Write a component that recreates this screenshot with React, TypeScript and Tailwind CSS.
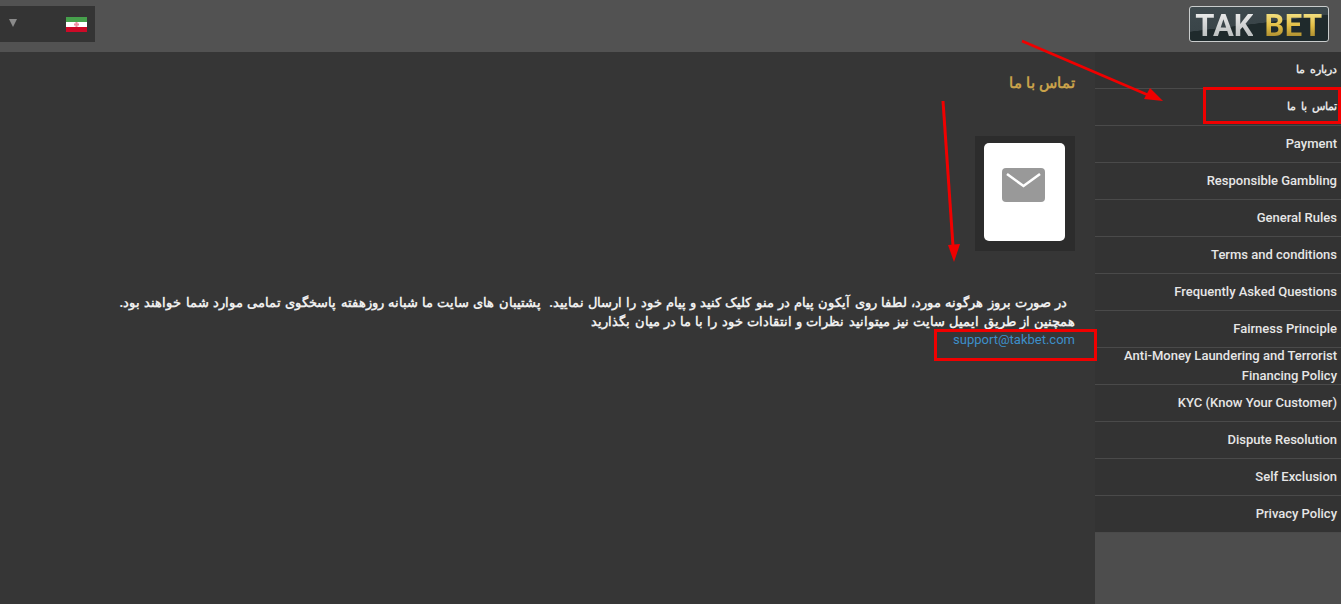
const menu = [
  { label: "درباره ما", fa: true },
  { label: "تماس با ما", fa: true },
  { label: "Payment" },
  { label: "Responsible Gambling" },
  { label: "General Rules" },
  { label: "Terms and conditions" },
  { label: "Frequently Asked Questions" },
  { label: "Fairness Principle" },
  { label: "Anti-Money Laundering and Terrorist Financing Policy" },
  { label: "KYC (Know Your Customer)" },
  { label: "Dispute Resolution" },
  { label: "Self Exclusion" },
  { label: "Privacy Policy" },
];

function Logo() {
  return (
    <div className="w-[140px] h-[36px] rounded-[3px] border border-[#c9cccc] bg-[linear-gradient(173deg,#3f4a4e_0%,#3a4549_48%,#1f2a2c_49%)] pt-[2px] flex items-center justify-center font-['Roboto',sans-serif] font-bold text-[31px] leading-none">
      <span className="bg-gradient-to-b from-[#f0f0f0] to-[#b4b8b8] bg-clip-text text-transparent">TAK</span>
      <span className="ml-[11px] tracking-[0.5px] bg-gradient-to-b from-[#f6e98f] via-[#e3bf45] to-[#9a7d28] bg-clip-text text-transparent">BET</span>
    </div>
  );
}

function Flag() {
  return (
    <svg className="mt-[1px]" width="21" height="15" viewBox="0 0 21 15">
      <rect width="21" height="5" fill="#46a04c" />
      <rect y="5" width="21" height="5" fill="#ffffff" />
      <rect y="10" width="21" height="5" fill="#cc0a27" />
      <path d="M10.5 5v5M8 7.5h5" stroke="#ee8fa0" strokeWidth="2" />
    </svg>
  );
}

function Header() {
  return (
    <header className="h-[52px] bg-[#525252] flex items-center justify-between pb-[4px] pr-[12px]">
      <div className="w-[95px] h-[36px] bg-[#343434] flex items-center pl-[9px] pr-[8px] justify-between">
        <span className="mb-[2px] w-0 h-0 border-x-[4.5px] border-x-transparent border-t-[8px] border-t-[#8a8a8a]" />
        <Flag />
      </div>
      <Logo />
    </header>
  );
}

function Sidebar() {
  return (
    <aside className="w-[246px] shrink-0 bg-[#4d4d4d] min-h-[552px]">
      <ul className="bg-[#333333]">
        {menu.map((item) => (
          <li
            key={item.label}
            dir={item.fa ? "rtl" : "ltr"}
            className={
              "h-[37px] flex items-center border-b border-[#4a4a4a] px-[4px] text-[#e6e6e6] leading-[20px] " +
              (item.fa
                ? "justify-start pb-[2px] font-['Noto_Sans',sans-serif] font-bold text-[11px] [word-spacing:2px]"
                : "justify-end text-right font-['Roboto',sans-serif] font-medium text-[13px]")
            }
          >
            <span>{item.label}</span>
          </li>
        ))}
      </ul>
    </aside>
  );
}

function Envelope() {
  return (
    <svg width="43" height="34" viewBox="0 0 43 34">
      <rect width="43" height="34" rx="4" fill="#999999" />
      <path d="M5 6l16.5 12L38 6" fill="none" stroke="#ffffff" strokeWidth="2.6" />
    </svg>
  );
}

function Content() {
  return (
    <main className="flex-1 min-w-0 pr-[20px] pt-[18px] flex flex-col items-start" dir="rtl">
      <h1 className="font-['Noto_Sans',sans-serif] font-bold text-[15px] leading-[24px] text-[#c9a24a]">تماس با ما</h1>
      <div className="mt-[42px] w-[100px] h-[115px] bg-[#2c2c2c] pl-[9px] pr-[10px] pt-[7px] pb-[10px]">
        <div className="h-full bg-white rounded-[5px] flex justify-center pt-[25px] pr-[2px]">
          <Envelope />
        </div>
      </div>
      <div className="mt-[42px] self-stretch text-right font-['Noto_Sans',sans-serif] font-bold text-[13px] [word-spacing:0.85px] leading-[19px] text-[#eeeeee]">
        <p className="pr-[8px]">
          در صورت بروز هرگونه مورد، لطفا روی آیکون پیام در منو کلیک کنید و پیام خود را ارسال نمایید.{"\u00a0\u00a0"}پشتیبان های سایت ما شبانه روزهفته پاسخگوی تمامی موارد شما خواهند بود.
        </p>
        <p>همچنین از طریق ایمیل سایت نیز میتوانید نظرات و انتقادات خود را با ما در میان بگذارید</p>
      </div>
      <a className="font-['Roboto',sans-serif] text-[13px] leading-[18px] text-[#3d8fc9]" dir="ltr">support@takbet.com</a>
    </main>
  );
}

function Annotations() {
  return (
    <>
      <div className="absolute left-[1203px] top-[87px] w-[138px] h-[37px] border-[3px] border-[#f00000]" />
      <div className="absolute left-[934px] top-[329px] w-[163px] h-[32px] border-[3px] border-[#f00000]" />
      <svg className="absolute left-[930px] top-[30px] pointer-events-none" width="250" height="240" viewBox="930 30 250 240">
        <path d="M1022 41L1148 95" stroke="#f00000" strokeWidth="2.5" />
        <path d="M1163 101L1144 99L1150 88Z" fill="#f00000" />
        <path d="M943 101L953 246" stroke="#f00000" strokeWidth="3" />
        <path d="M954 262L948 245L960 244Z" fill="#f00000" />
      </svg>
    </>
  );
}

export default function App() {
  return (
    <div className="relative w-[1341px] h-[604px] overflow-hidden bg-[#363636]">
      <Header />
      <div className="flex">
        <Content />
        <Sidebar />
      </div>
      <Annotations />
    </div>
  );
}
